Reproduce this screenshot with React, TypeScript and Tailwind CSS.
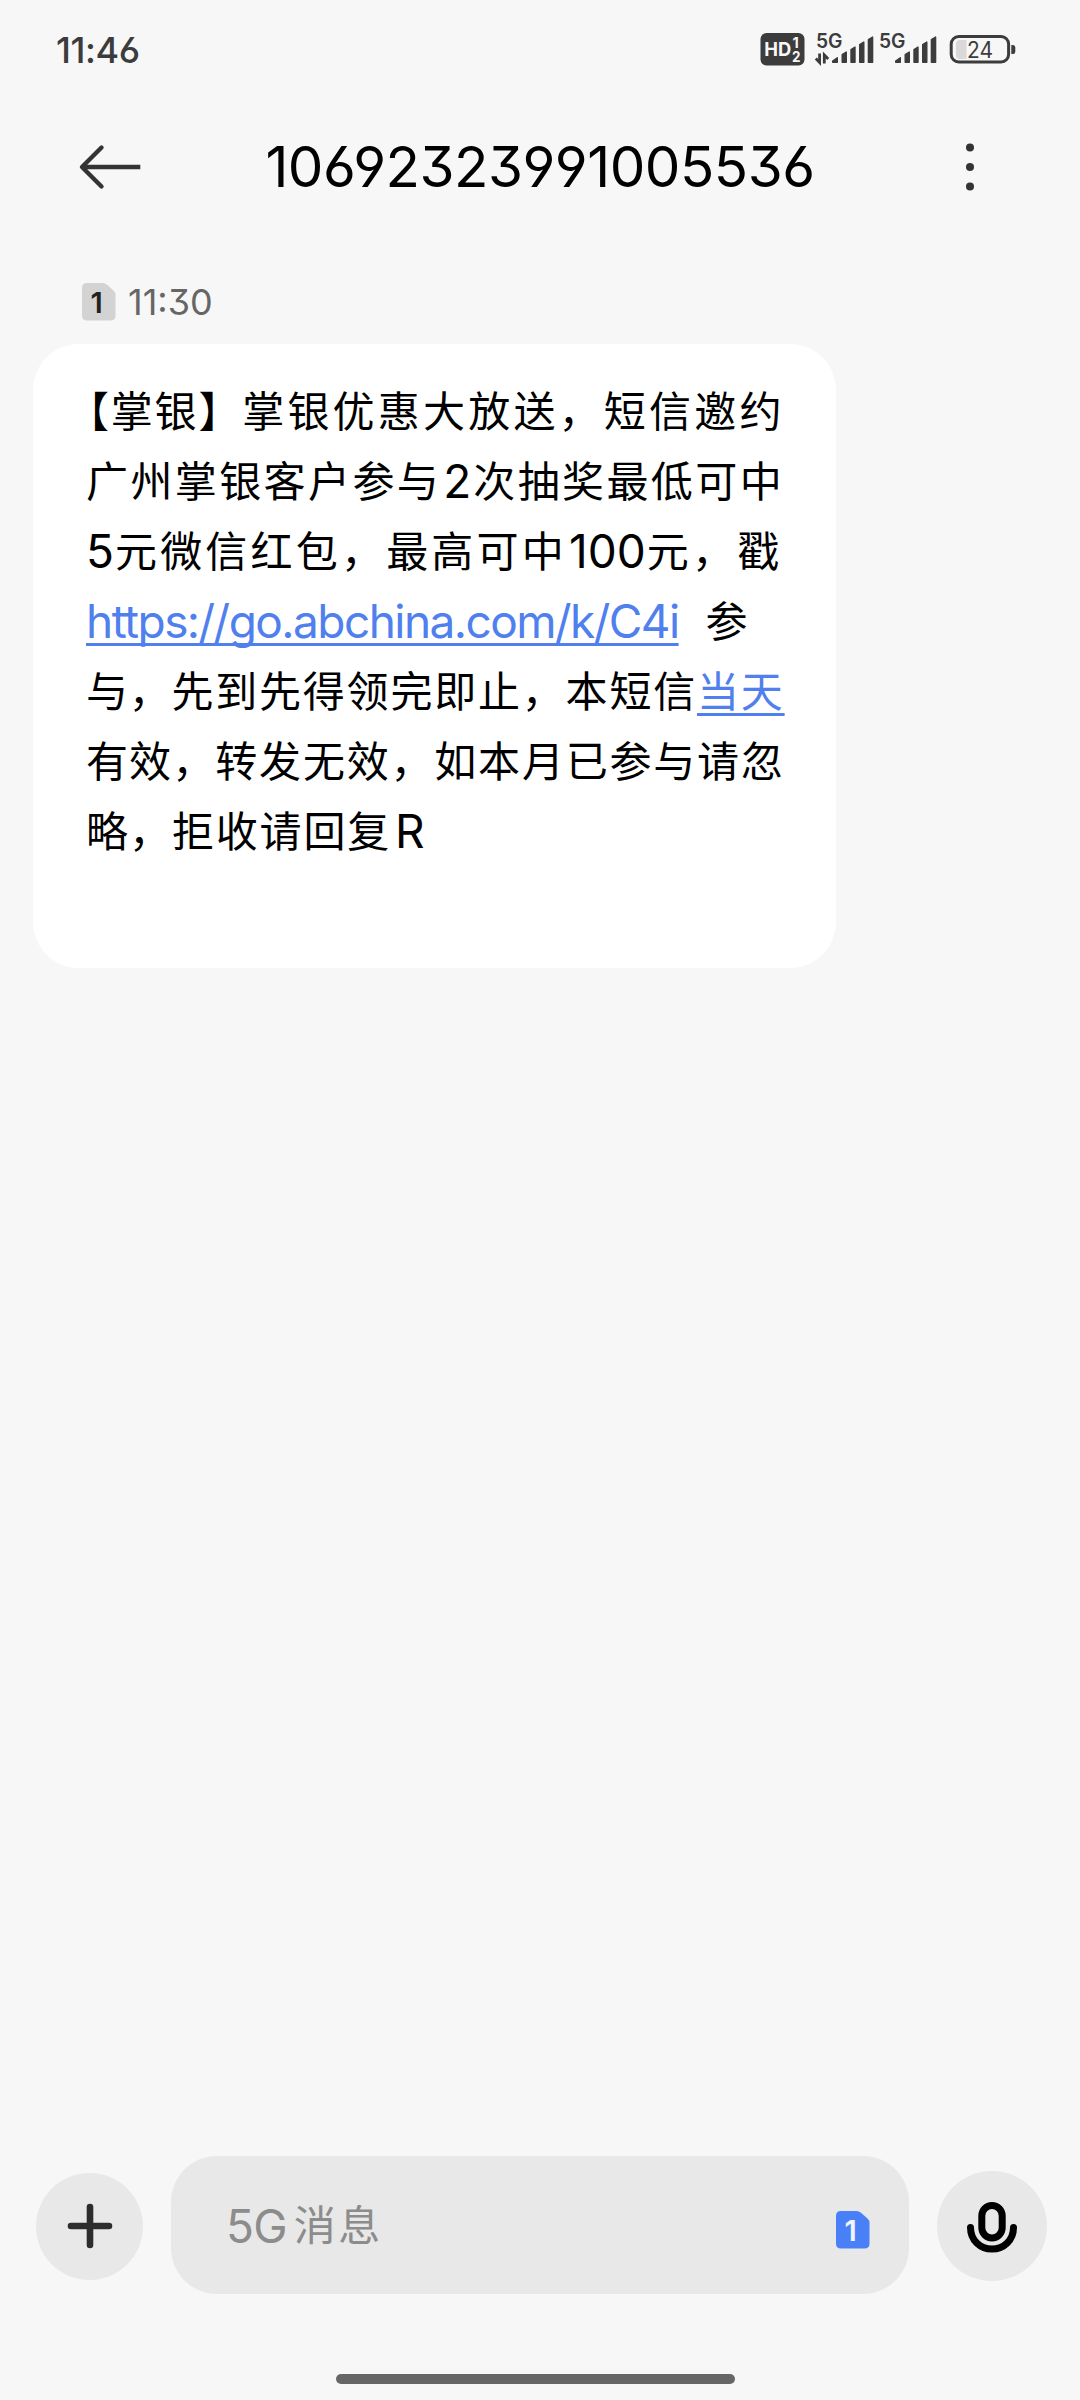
import type { ReactNode } from 'react'
import clsx from 'clsx'

const digits = "[font-feature-settings:'cv03','cv04','cv09','tnum'_0]"

function SignalBars({ x }: { x: number }) {
  return (
    <g transform={`translate(${x} 0)`} strokeLinejoin="round" stroke="#3c3c3c" strokeWidth="1.4">
      <path d="M0.7 42.3V41L5.3 37.7V42.3Z" />
      <path d="M10.2 42.3V34.5L14.3 32V42.3Z" />
      <path d="M19 42.3V29.5L23 27V42.3Z" />
      <path d="M27.7 42.3V24.5L31.8 22V42.3Z" />
      <path d="M36.4 42.3V19.5L40.6 17V42.3Z" />
    </g>
  )
}

function StatusIcons() {
  return (
    <svg width="260" height="60" viewBox="0 0 260 60" fill="#3c3c3c" className="font-['Inter',sans-serif]">
      <rect x="0.5" y="13" width="44" height="32.5" rx="6" />
      <g fill="#f7f7f7" className="font-bold">
        <text x="4.2" y="36.2" fontSize="19" textLength="27" lengthAdjust="spacingAndGlyphs">HD</text>
        <text x="32.5" y="27.6" fontSize="14.500">1</text>
        <text x="32" y="41.600" fontSize="14.500" textLength="8.5" lengthAdjust="spacingAndGlyphs">2</text>
      </g>

      <g fontSize="19.5" className="font-semibold">
        <text x="56" y="28" textLength="26.5" lengthAdjust="spacingAndGlyphs">5G</text>
        <text x="119" y="28" textLength="26.5" lengthAdjust="spacingAndGlyphs">5G</text>
      </g>

      {/* data up / down */}
      <g fill="none" stroke="#3c3c3c" strokeWidth="2.8">
        <path d="M59.6 33.5V42.5L55.8 38.5" />
        <path d="M64.3 43.5V35L68.2 39" />
      </g>
      <SignalBars x={72} />
      <SignalBars x={135} />

      <rect x="191.2" y="16.6" width="57.4" height="25.4" rx="7.5" fill="none" stroke="#3c3c3c" strokeWidth="3" />
      <path d="M200 20H206.5V39H200Q196 39 196 35V24Q196 20 200 20Z" fill="#d9d9d9" />
      <path d="M251.3 25H253Q255.3 25 255.3 27.5V31.5Q255.3 34 253 34H251.3Z" />
      <text x="207" y="37.8" fontSize="22.5" textLength="26" lengthAdjust="spacingAndGlyphs">24</text>
    </svg>
  )
}

function SimBadge({ className, color }: { className?: string; color: string }) {
  return (
    <svg width="34" height="38" viewBox="0 0 34 38" className={className}>
      <path d="M5 0H20.5Q23 0 25 1.8L31.5 7.6Q33.5 9.4 33.5 12V32.5Q33.5 37.5 28.5 37.5H5Q0 37.5 0 32.5V5Q0 0 5 0Z" fill="currentColor" />
      <text x="8.5" y="29.6" fontSize="29" fill={color} className="font-['Inter',sans-serif] font-semibold">1</text>
    </svg>
  )
}

function Line({ children, className }: { children: ReactNode; className?: string }) {
  return <div className={clsx('flex h-[70px] items-center whitespace-pre', className)}>{children}</div>
}

function Latin({ children, className }: { children: ReactNode; className?: string }) {
  return (
    <span className={clsx("mt-[3px] font-['Inter',sans-serif] text-[46px]", digits, className)}>{children}</span>
  )
}

export default function App() {
  return (
    <div className="flex h-[2400px] w-[1080px] flex-col bg-[#f7f7f7] font-['Inter','Noto_Sans_CJK_SC',sans-serif] text-black">
      <div className="flex h-[100px] items-start justify-between pr-[60px] pl-[56px]">
        <span className={clsx('pt-[20px] text-[36px] leading-[60px] font-medium tracking-[-0.4px] text-[#3c3c3c]', digits)}>
          11:46
        </span>
        <div className="mt-[20px]">
          <StatusIcons />
        </div>
      </div>

      <header className="flex h-[134px] items-center justify-between px-[78px]">
        <svg width="64" height="48" viewBox="0 0 64 48" fill="none" stroke="#333" strokeWidth="4.4" strokeLinejoin="round">
          <path d="M4 24H62.3" />
          <path d="M23.5 4.5L4 24L23.5 43.5" strokeLinecap="round" />
        </svg>
        <h1 className={clsx('mt-[1px] text-[56.5px] leading-none tracking-[-0.5px]', digits)}>
          10692323991005536
        </h1>
        <svg width="64" height="48" viewBox="0 0 64 48" fill="#333">
          <circle cx="32" cy="4.6" r="4" />
          <circle cx="32" cy="24" r="4" />
          <circle cx="32" cy="43.4" r="4" />
        </svg>
      </header>

      <main className="flex flex-1 flex-col">
        <div className="mt-[48px] flex h-[40px] items-center pl-[82px]">
          <SimBadge className="text-[#d3d3d3]" color="#222" />
          <span className={clsx('ml-[12px] text-[36px] leading-none text-[#666]', digits)}>11:30</span>
        </div>

        <div className="mt-[22px] ml-[33px] h-[624px] w-[803px] rounded-[46px] bg-white pt-[30px] pl-[53px] font-['Noto_Sans_CJK_SC',sans-serif] text-[42px] leading-[70px]">
          <Line className="-ml-[19px] tracking-[3.2px]">
            <span className="tracking-[1.8px]">【掌银】</span>
            <span>掌银优惠大放送，短信邀约</span>
          </Line>
          <Line className="tracking-[2.4px]">
            <span>广州掌银客户参与</span>
            <Latin className="ml-[2px] tracking-[2px]">2</Latin>
            <span>次抽奖最低可中</span>
          </Line>
          <Line className="tracking-[3.2px]">
            <Latin className="tracking-[1px]">5</Latin>
            <span>元微信红包，最高可中</span>
            <Latin className="ml-[2px] tracking-[0px]">100</Latin>
            <span className="ml-[1px]">元，戳</span>
          </Line>
          <Line>
            <a className="mt-[3px] text-[#4f80ee] underline decoration-[3px] underline-offset-[5px] [text-decoration-skip-ink:none]">
              <Latin className="tracking-[-1.55px]">https://go.abchina.com/k/C4i</Latin>
            </a>
            <span className="ml-[27px]">参</span>
          </Line>
          <Line className="tracking-[1.8px]">
            <span className="tracking-[0.7px]">与，</span>
            <span>先到先得领完即止，本短信</span>
            <a className="text-[#4f80ee] underline decoration-[3px] underline-offset-[6px]">当天</a>
          </Line>
          <Line className="tracking-[1.8px]">
            <span className="tracking-[1.1px]">有效，</span>
            <span>转发无效，如本月已参与请忽</span>
          </Line>
          <Line className="tracking-[1.8px]">
            <span className="tracking-[1px]">略，</span>
            <span>拒收请回复</span>
            <Latin className="ml-[4px]">R</Latin>
          </Line>
        </div>
      </main>

      <footer className="flex h-[244px] flex-col">
        <div className="flex h-[138px] items-center pl-[36px]">
          <button className="mt-[2px] flex size-[107px] items-center justify-center rounded-full bg-[#e8e8e8]">
            <svg width="46" height="46" viewBox="0 0 46 46" stroke="#2d2d2d" strokeWidth="6.6" strokeLinecap="round">
              <path d="M4 23H42M23 4V42" />
            </svg>
          </button>
          <div className="ml-[28px] flex h-[138px] w-[738px] items-center justify-between rounded-[46px] bg-[#e8e8e8] pr-[39px] pl-[55px] text-[#8c8c8c]">
            <div className="flex items-center">
              <Latin className="-mt-[2px] tracking-[-0.8px]">5G</Latin>
              <span className="-mt-[4px] ml-[7px] font-['Noto_Sans_CJK_SC',sans-serif] text-[42px] leading-[70px] tracking-[2.5px]">消息</span>
            </div>
            <SimBadge className="mt-[9px] text-[#4a80f7]" color="#f2f4fa" />
          </div>
          <button className="mt-[2px] ml-[28px] flex size-[110px] items-center justify-center rounded-full bg-[#e8e8e8]">
            <svg width="52" height="52" viewBox="0 0 52 52" fill="none" stroke="#000" strokeWidth="7" strokeLinecap="round" className="mt-[3px]">
              <rect x="15.8" y="3.5" width="20.4" height="32.5" rx="10.2" />
              <path d="M4.5 25.5C4.5 38 14 47 26 47S47.5 38 47.5 25.5" />
            </svg>
          </button>
        </div>
        <div className="mt-[80px] ml-[336px] h-[10px] w-[399px] rounded-full bg-[#666]" />
      </footer>
    </div>
  )
}
